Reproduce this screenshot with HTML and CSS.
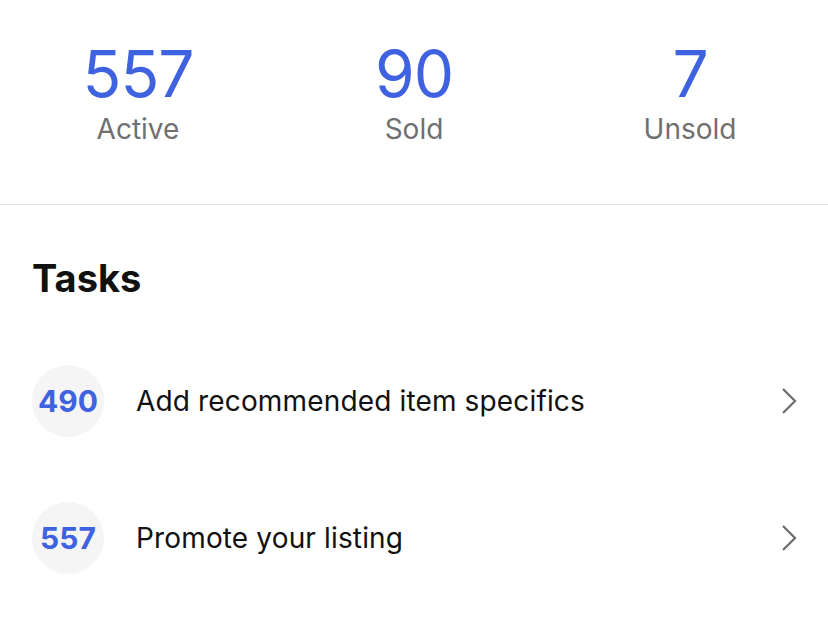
FILE: index.html
```html
<!DOCTYPE html>
<html lang="en">
<head>
  <meta charset="UTF-8">
  <meta name="viewport" content="width=device-width, initial-scale=1.0">
  <title>Listings</title>
  <link rel="stylesheet" href="styles.css">
</head>
<body>
  <div class="stats">
    <div class="stat">
      <span class="stat-num">557</span>
      <span class="stat-label">Active</span>
    </div>
    <div class="stat">
      <span class="stat-num">90</span>
      <span class="stat-label">Sold</span>
    </div>
    <div class="stat">
      <span class="stat-num">7</span>
      <span class="stat-label">Unsold</span>
    </div>
  </div>

  <div class="tasks">
    <h2 class="tasks-title">Tasks</h2>

    <div class="task">
      <span class="task-count">490</span>
      <span class="task-text">Add recommended item specifics</span>
      <svg class="chevron" width="18" height="28" viewBox="0 0 18 28">
        <path d="M3 2 L15 14 L3 26" fill="none" stroke="#6b6b6b" stroke-width="2.2"/>
      </svg>
    </div>

    <div class="task">
      <span class="task-count">557</span>
      <span class="task-text">Promote your listing</span>
      <svg class="chevron" width="18" height="28" viewBox="0 0 18 28">
        <path d="M3 2 L15 14 L3 26" fill="none" stroke="#6b6b6b" stroke-width="2.2"/>
      </svg>
    </div>
  </div>
</body>
</html>
```

FILE: styles.css
```css
* {
  box-sizing: border-box;
}

body {
  margin: 0;
  background: #fff;
  font-family: Inter, "Noto Sans", sans-serif;
  color: #111;
}

.stats {
  display: grid;
  grid-template-columns: repeat(3, 1fr);
  padding-top: 42px;
  height: 205px;
  border-bottom: 1px solid #e5e5e5;
}

.stat {
  display: flex;
  flex-direction: column;
  align-items: center;
  gap: 8px;
}

.stat-num {
  font-size: 64px;
  line-height: 64px;
  color: #3f63e0;
  letter-spacing: -1px;
}

.stat-label {
  font-size: 28px;
  line-height: 30px;
  color: #707070;
}

.tasks {
  padding: 0 30px 0 32px;
}

.tasks-title {
  margin: 0;
  padding-top: 50px;
  font-size: 38px;
  line-height: 46px;
  font-weight: 700;
  color: #111;
}

.task {
  display: flex;
  align-items: center;
  height: 137px;
}

.task:first-of-type {
  margin-top: 31px;
}

.task-count {
  width: 72px;
  height: 72px;
  border-radius: 50%;
  background: #f5f5f5;
  display: flex;
  justify-content: center;
  align-items: center;
  font-size: 30px;
  font-weight: 700;
  color: #3f63e0;
  flex-shrink: 0;
}

.task-text {
  flex: 1;
  margin-left: 32px;
  font-size: 28px;
  letter-spacing: 0.15px;
  color: #111;
}
```
